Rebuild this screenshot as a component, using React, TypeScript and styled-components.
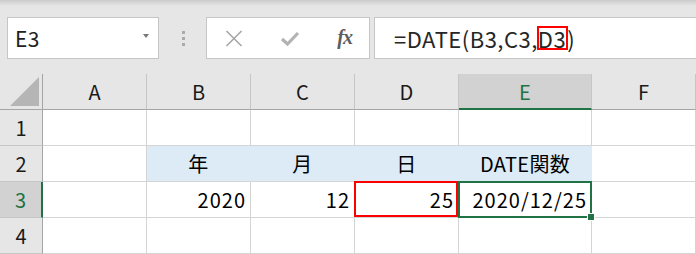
import styled, { createGlobalStyle, css } from "styled-components";

const GlobalStyle = createGlobalStyle`
  html, body {
    margin: 0;
    padding: 0;
    background: #e6e6e6;
  }
`;

const FONT = `"Noto Sans CJK JP", "Noto Sans", sans-serif`;
const GREEN = "#217346";

const COLUMNS = ["A", "B", "C", "D", "E", "F"];
const SELECTED_COL = "E";
const SELECTED_ROW = 3;

type Align = "left" | "center" | "right";
type Mark = "none" | "ref" | "active";

interface CellData {
  text?: string;
  align?: Align;
  fill?: boolean;
  mark?: Mark;
}

const ROWS: CellData[][] = [
  [{}, {}, {}, {}, {}, {}],
  [
    {},
    { text: "年", align: "center", fill: true },
    { text: "月", align: "center", fill: true },
    { text: "日", align: "center", fill: true },
    { text: "DATE関数", align: "center", fill: true },
    {},
  ],
  [
    {},
    { text: "2020", align: "right" },
    { text: "12", align: "right" },
    { text: "25", align: "right", mark: "ref" },
    { text: "2020/12/25", align: "right", mark: "active" },
    {},
  ],
  [{}, {}, {}, {}, {}, {}],
];

const App = () => (
  <>
    <GlobalStyle />
    <Window>
      <TopShade />
      <FormulaBar>
        <NameBox>
          <span>E3</span>
          <DropArrow />
        </NameBox>
        <Grip>
          <i />
          <i />
          <i />
        </Grip>
        <ActionBox>
          <svg width="18" height="17" viewBox="0 0 18 17">
            <path d="M1.5 1 L16.5 16 M16.5 1 L1.5 16" stroke="#a6a6a6" strokeWidth="1.6" fill="none" />
          </svg>
          <svg width="20" height="17" viewBox="0 0 20 17">
            <path d="M2 9 L7.5 14 L18 3" stroke="#b3b3b3" strokeWidth="3.2" fill="none" />
          </svg>
          <FxLabel>fx</FxLabel>
        </ActionBox>
        <FormulaBox>
          =DATE(B3,C3,<RefOutline>D3</RefOutline>)
        </FormulaBox>
      </FormulaBar>

      <Grid>
        <Corner>
          <svg width="30" height="29" viewBox="0 0 30 29">
            <polygon points="29,0 29,29 0,29" fill="#b5b5b5" />
          </svg>
        </Corner>
        {COLUMNS.map((c) => (
          <ColHead key={c} $selected={c === SELECTED_COL}>
            {c}
          </ColHead>
        ))}
        {ROWS.map((row, r) => (
          <Row key={r} index={r + 1} cells={row} />
        ))}
      </Grid>
    </Window>
  </>
);

const Row: React.FC<{ index: number; cells: CellData[] }> = ({ index, cells }) => (
  <>
    <RowHead $selected={index === SELECTED_ROW}>{index}</RowHead>
    {cells.map((cell, i) => (
      <Cell
        key={i}
        $align={cell.align ?? "left"}
        $fill={!!cell.fill}
        $mark={cell.mark ?? "none"}
      >
        {cell.text}
      </Cell>
    ))}
  </>
);

const Window = styled.div`
  width: 696px;
  height: 254px;
  overflow: hidden;
  background: #e6e6e6;
  font-family: ${FONT};
  color: #000;
`;

const TopShade = styled.div`
  height: 6px;
  background: linear-gradient(#cbcbcb, #e6e6e6);
`;

const FormulaBar = styled.div`
  display: flex;
  height: 42px;
  margin: 11px -3px 15px 0;
  padding-left: 7px;
`;

const Box = styled.div`
  box-sizing: border-box;
  height: 42px;
  background: #fff;
  border: 1px solid #c6c6c6;
  display: flex;
  align-items: center;
`;

const NameBox = styled(Box)`
  width: 152px;
  padding: 0 9px 0 7px;
  justify-content: space-between;
  font-size: 21px;
  color: #222;
  letter-spacing: 0.5px;

  span {
    line-height: 1;
    margin-top: 1px;
  }
`;

const DropArrow = styled.div`
  width: 0;
  height: 0;
  border-left: 3.5px solid transparent;
  border-right: 3.5px solid transparent;
  border-top: 4px solid #777;
  margin-top: -4px;
`;

const Grip = styled.div`
  width: 45px;
  display: flex;
  flex-direction: column;
  align-items: center;
  justify-content: center;
  gap: 3px;
  padding-left: 2px;

  i {
    display: block;
    width: 3px;
    height: 3px;
    background: #ababab;
  }
`;

const ActionBox = styled(Box)`
  width: 164px;
  padding: 0 17px 0 18px;
  justify-content: space-between;
`;

const FxLabel = styled.span`
  font-family: "Liberation Serif", "DejaVu Serif", serif;
  font-style: italic;
  font-weight: bold;
  font-size: 20px;
  color: #5e5e5e;
  letter-spacing: -1px;
  margin-top: -2px;
`;

const FormulaBox = styled(Box)`
  flex: 1;
  margin-left: 4px;
  padding-left: 19px;
  font-size: 22px;
  letter-spacing: 0.5px;
  color: #262626;
  white-space: nowrap;
`;

const RefOutline = styled.span`
  outline: 2px solid #ff0000;
  outline-offset: -1px;
  line-height: 22px;
  display: inline-block;
  padding: 0 1px 0 0;
`;

const Grid = styled.div`
  display: grid;
  grid-template-columns: 43px 104px 104px 104px 104px 133px 1fr;
  grid-auto-rows: 36px;
`;

const HeadBase = styled.div`
  box-sizing: border-box;
  display: flex;
  align-items: center;
  justify-content: center;
  background: #e6e6e6;
  font-size: 20px;
  color: #1a1a1a;
`;

const Corner = styled(HeadBase)`
  border-right: 1px solid #a5a5a5;
  border-bottom: 1px solid #a5a5a5;
  align-items: flex-end;
  justify-content: flex-end;
  padding: 0 2px 3px 0;
`;

const ColHead = styled(HeadBase)<{ $selected: boolean }>`
  border-right: 1px solid #c6c6c6;
  border-bottom: 1px solid #a5a5a5;

  ${({ $selected }) =>
    $selected &&
    css`
      background: #d2d2d2;
      color: ${GREEN};
      border-bottom: 2px solid ${GREEN};
    `}
`;

const RowHead = styled(HeadBase)<{ $selected: boolean }>`
  border-right: 1px solid #a5a5a5;
  border-bottom: 1px solid #c6c6c6;

  ${({ $selected }) =>
    $selected &&
    css`
      background: #d2d2d2;
      color: ${GREEN};
      border-right: 2px solid ${GREEN};
    `}
`;

const justify: Record<Align, string> = {
  left: "flex-start",
  center: "center",
  right: "flex-end",
};

const Cell = styled.div<{ $align: Align; $fill: boolean; $mark: Mark }>`
  box-sizing: border-box;
  position: relative;
  display: flex;
  align-items: center;
  justify-content: ${({ $align }) => justify[$align]};
  padding: 0 4px 0 4px;
  font-size: 20px;
  letter-spacing: ${({ $align }) => ($align === "right" ? "1px" : "0.3px")};
  background: ${({ $fill }) => ($fill ? "#ddebf7" : "#fff")};
  border-right: 1px solid ${({ $fill }) => ($fill ? "#ddebf7" : "#d4d4d4")};
  border-bottom: 1px solid #d4d4d4;

  ${({ $mark }) =>
    $mark === "ref" &&
    css`
      z-index: 1;
      &::after {
        content: "";
        position: absolute;
        top: -1px;
        left: -1px;
        right: 0;
        bottom: 0;
        border: 2px solid #ff0000;
      }
    `}

  ${({ $mark }) =>
    $mark === "active" &&
    css`
      z-index: 2;
      &::after {
        content: "";
        position: absolute;
        top: -1px;
        left: -1px;
        right: -1px;
        bottom: -1px;
        border: 2px solid ${GREEN};
      }
      &::before {
        content: "";
        position: absolute;
        right: -4px;
        bottom: -4px;
        width: 6px;
        height: 6px;
        background: ${GREEN};
        border: 1px solid #fff;
        z-index: 3;
      }
    `}
`;

export default App;
